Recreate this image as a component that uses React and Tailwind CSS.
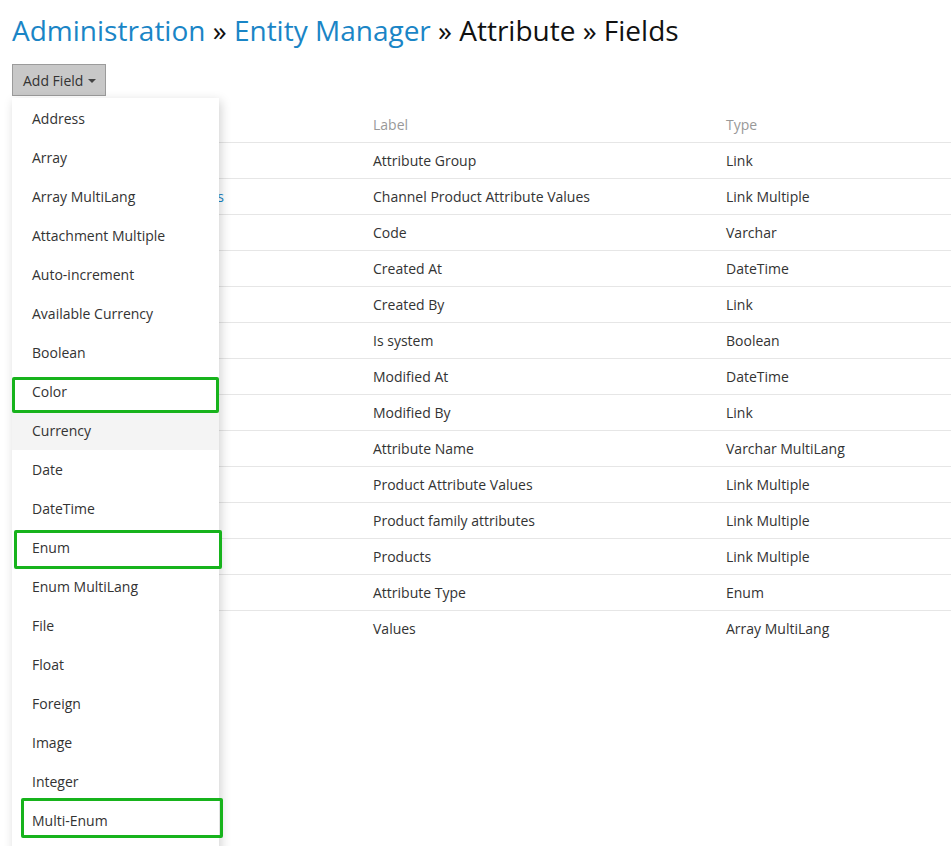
const TYPES = [
  'Address', 'Array', 'Array MultiLang', 'Attachment Multiple', 'Auto-increment',
  'Available Currency', 'Boolean', 'Color', 'Currency', 'Date', 'DateTime', 'Enum',
  'Enum MultiLang', 'File', 'Float', 'Foreign', 'Image', 'Integer', 'Multi-Enum',
]

const FIELDS = [
  ['attributeGroup', 'Attribute Group', 'Link'],
  ['channelProductAttributeValues', 'Channel Product Attribute Values', 'Link Multiple'],
  ['code', 'Code', 'Varchar'],
  ['createdAt', 'Created At', 'DateTime'],
  ['createdBy', 'Created By', 'Link'],
  ['isSystem', 'Is system', 'Boolean'],
  ['modifiedAt', 'Modified At', 'DateTime'],
  ['modifiedBy', 'Modified By', 'Link'],
  ['name', 'Attribute Name', 'Varchar MultiLang'],
  ['productAttributeValues', 'Product Attribute Values', 'Link Multiple'],
  ['productFamilyAttributes', 'Product family attributes', 'Link Multiple'],
  ['products', 'Products', 'Link Multiple'],
  ['type', 'Attribute Type', 'Enum'],
  ['typeValue', 'Values', 'Array MultiLang'],
]

export default function App() {
  return (
    <div className="relative h-[846px] overflow-hidden bg-white pl-3 font-['Open_Sans',sans-serif] text-[14px] text-[#333]">
      <h1 className="pt-[10px] text-[28px] leading-[40px] text-[#111] whitespace-nowrap">
        <a className="text-[#1a85c6]">Administration</a> » <a className="text-[#1a85c6]">Entity Manager</a> » Attribute » Fields
      </h1>

      <div className="relative mt-[14px]">
        <button className="flex h-[32px] items-center gap-[5px] border border-[#9b9b9b] bg-[#c8c8c8] pl-[10px] pr-[9px] text-[14px] text-[#333]">
          Add Field
          <span className="mt-[2px] border-x-[4px] border-t-[4px] border-x-transparent border-t-[#444]" />
        </button>

        <div className="absolute left-0 top-[34px] z-10 w-[207px] bg-white pt-px pb-10 shadow-[2px_3px_10px_rgba(0,0,0,0.18)]">
          {TYPES.map(t => (
            <div key={t}
              className={`flex h-[39px] items-center px-5 ${t === 'Currency' ? 'bg-[#f4f4f4]' : ''}`}>
              {t}
            </div>
          ))}
        </div>

        <div className="mt-[11px]">
          <div className="grid h-[35px] grid-cols-[353px_353px_1fr] items-center text-[#999]">
            <div className="px-2">Name</div>
            <div className="px-2">Label</div>
            <div className="px-2">Type</div>
          </div>
          {FIELDS.map(([name, label, type]) => (
            <div key={name} className="grid h-[36px] grid-cols-[353px_353px_1fr] items-center border-t border-[#e6e6e6]">
              <div className="px-2 text-[#1a85c6]">{name}</div>
              <div className="px-2">{label}</div>
              <div className="px-2 whitespace-nowrap">{type}</div>
            </div>
          ))}
        </div>
      </div>

      <div className="absolute left-[12px] top-[377px] z-20 h-[36px] w-[207px] rounded-[2px] border-[3px] border-[#17b31c]" />
      <div className="absolute left-[14px] top-[530px] z-20 h-[39px] w-[208px] rounded-[2px] border-[3px] border-[#17b31c]" />
      <div className="absolute left-[21px] top-[798px] z-20 h-[40px] w-[202px] rounded-[2px] border-[3px] border-[#17b31c]" />
    </div>
  )
}
